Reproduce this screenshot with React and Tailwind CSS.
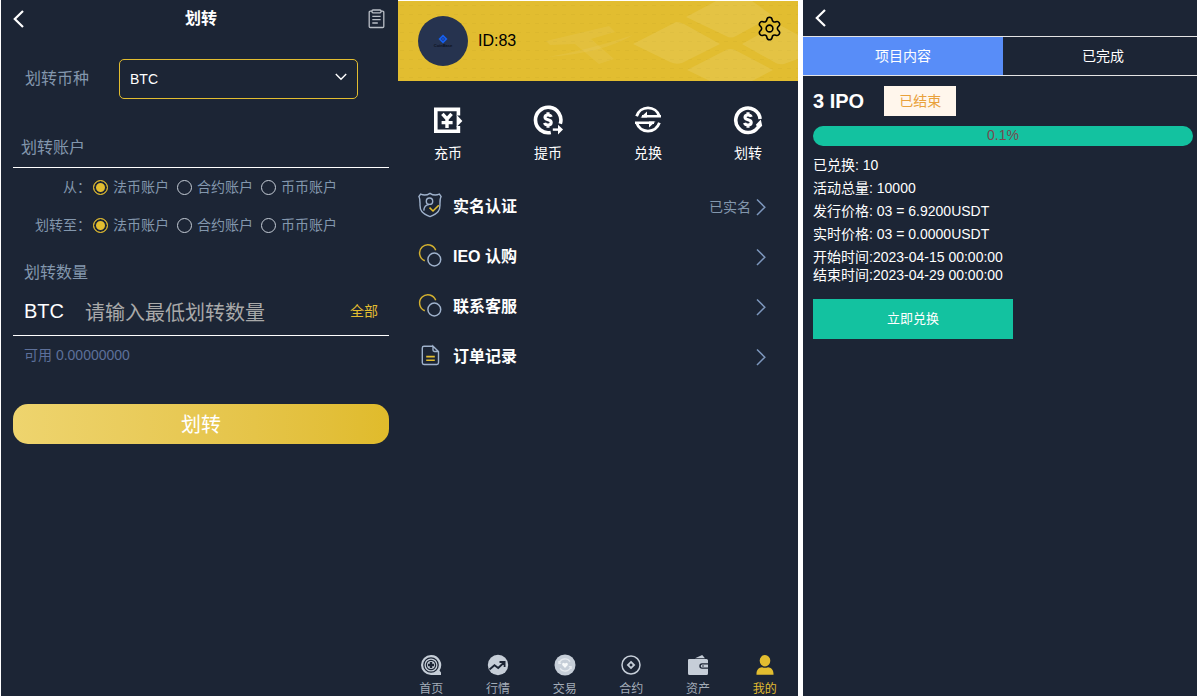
import { useState } from "react";
import { Settings } from "lucide-react";

const accounts = ["法币账户", "合约账户", "币币账户"];

function BackButton() {
  return (
    <button aria-label="返回" className="justify-self-start text-white cursor-pointer">
      <svg width="12" height="18" viewBox="0 0 12 18" fill="none" stroke="currentColor" strokeWidth="2.2">
        <path d="M10 1 L1.8 9 L10 17" />
      </svg>
    </button>
  );
}

function RadioRow({ name, title }) {
  const [value, setValue] = useState(accounts[0]);

  return (
    <div role="radiogroup" aria-label={title} className="flex items-center h-[38px] text-sm text-[#8397ad]">
      <span className="w-[78px] text-right mr-0.5">{title}</span>
      {accounts.map((a) => (
        <label key={a} className="flex items-center gap-[5px] mr-2">
          <input
            type="radio"
            name={name}
            checked={value === a}
            onChange={() => setValue(a)}
            className="appearance-none size-[15px] rounded-full border border-[#c5ccd6] checked:border-[#e2bd30] checked:bg-[#e2bd30] checked:shadow-[inset_0_0_0_2px_#1c2535]"
          />
          {a}
        </label>
      ))}
    </div>
  );
}

function TransferPanel() {
  const [amount, setAmount] = useState("");

  return (
    <section className="bg-[#1c2535] pl-3 pr-[9px]">
      <header className="grid grid-cols-3 items-center h-[37px]">
        <BackButton />
        <h1 className="text-center text-base font-bold text-white">划转</h1>
        <button aria-label="记录" className="justify-self-end mr-1 text-[#b9bec6] cursor-pointer">
          <svg width="17" height="20" viewBox="0 0 17 20" fill="none" stroke="currentColor" strokeWidth="1.3">
            <path d="M4 2.2H2.3Q1.2 2.2 1.2 3.3V17.4Q1.2 18.5 2.3 18.5H14.7Q15.8 18.5 15.8 17.4V3.3Q15.8 2.2 14.7 2.2H13" />
            <rect x="4" y="1" width="9" height="2.8" rx="1" />
            <path d="M4.3 7.4H12.6M4.3 10.7H12.6M4.3 14H9.8" />
          </svg>
        </button>
      </header>

      <div className="flex items-center mt-[22px] pl-3">
        <label htmlFor="coin" className="w-[94px] text-base text-[#8397ad]">
          划转币种
        </label>
        <div className="relative grow mr-[31px]">
          <select
            id="coin"
            className="appearance-none w-full h-10 rounded-[5px] border border-[#e2bd30] bg-transparent px-2.5 text-sm text-white"
          >
            <option>BTC</option>
          </select>
          <svg
            className="absolute right-[11px] top-3.5 pointer-events-none"
            width="12"
            height="8"
            viewBox="0 0 12 8"
            fill="none"
            stroke="white"
            strokeWidth="1.4"
          >
            <path d="M0.8 1 L6 6.2 L11.2 1" />
          </svg>
        </div>
      </div>

      <h2 className="mt-[37px] h-[31px] pl-2 text-base text-[#8397ad]">划转账户</h2>
      <div className="border-t border-white">
        <RadioRow name="from" title="从：" />
        <RadioRow name="to" title="划转至：" />
      </div>

      <label htmlFor="amount" className="block mt-[17px] pl-[11px] text-base text-[#8397ad]">
        划转数量
      </label>
      <div className="flex items-center h-[51px] pt-0.5 border-b border-white pl-[11px] pr-[11px]">
        <span className="w-[61px] text-xl text-white">BTC</span>
        <input
          id="amount"
          value={amount}
          onChange={(e) => setAmount(e.target.value)}
          placeholder="请输入最低划转数量"
          className="grow min-w-0 pt-1 bg-transparent text-xl text-white outline-none placeholder:text-[#a9a9a9]"
        />
        <button className="text-sm text-[#e2bd30] cursor-pointer">全部</button>
      </div>
      <p className="mt-[9px] pl-[11px] text-sm text-[#5d709a]">可用 0.00000000</p>

      <button className="block w-full h-10 mt-[39px] pt-0.5 rounded-[15px] bg-linear-to-r from-[#eed46e] to-[#e0bb2b] text-xl text-white cursor-pointer">
        划转
      </button>
    </section>
  );
}

function DepositIcon() {
  return (
    <svg width="30" height="30" viewBox="0 0 30 30" fill="none" stroke="white">
      <path d="M25.4 10.5V4.4H2.8V26.2H25.4V21" strokeWidth="3.6" />
      <path d="M23.6 9.8L29.4 16L23.6 22Z" fill="white" stroke="none" />
      <path d="M9.4 8.8L14 14L18.6 8.8M14 13.5V23M8.6 17.6H19.6" strokeWidth="3.4" />
    </svg>
  );
}

function Dollar() {
  return (
    <path
      d="M18.2 11.9C17.8 10.6 16.7 10 15 10C13.1 10 12 10.8 12 12.3C12 15.8 18.2 13.8 18.2 17.5C18.2 19.2 17 20 15 20C13.1 20 12 19.3 11.6 17.9M15 7.2V10M15 20V22.8"
      strokeWidth="3.1"
    />
  );
}

function WithdrawIcon() {
  return (
    <svg width="30" height="30" viewBox="0 0 30 30" fill="none" stroke="white">
      <path d="M17.8 27.4A12.7 12.7 0 1 1 27.3 18.8" strokeWidth="3.6" />
      <Dollar />
      <path d="M19.8 24.6H27" strokeWidth="2.4" />
      <path d="M25 19.8L30 24.6L25 29.4Z" fill="white" stroke="none" />
    </svg>
  );
}

function SwapIcon() {
  return (
    <svg width="30" height="30" viewBox="0 0 30 30" fill="none" stroke="white">
      <path d="M3.6 11.2A12 12 0 0 1 26.4 11.2M26.4 17.8A12 12 0 0 1 3.6 17.8" strokeWidth="2.8" />
      <path d="M9 11.2H28M21 17.8H2" strokeWidth="2.6" />
      <path d="M7.5 12.4L14 6.6V12.4ZM22.5 16.6L16 22.4V16.6Z" fill="white" stroke="none" />
    </svg>
  );
}

function TransferIcon() {
  return (
    <svg width="30" height="30" viewBox="0 0 30 30" fill="none" stroke="white">
      <path d="M25 22.2A12.2 12.2 0 1 1 27.1 14" strokeWidth="3.6" />
      <Dollar />
      <path d="M22.9 19.8L27.8 14.4L29.2 20.8L25.5 24.2Z" fill="white" stroke="none" />
    </svg>
  );
}

function VerifyIcon() {
  return (
    <svg width="24" height="30" viewBox="0 0 24 30" fill="none" stroke="#9fb2cc" strokeWidth="1.4">
      <path d="M12 1.3C9.5 3 5.5 3.4 2.6 2.2L0.9 4.5C2.4 7 2.1 9.5 2 13C2 18.5 3.5 21 12 24.6C20.5 21 22 18.5 22 13C21.9 9.5 21.6 7 23.1 4.5L21.4 2.2C18.5 3.4 14.5 3 12 1.3Z" />
      <circle cx="11.5" cy="9.2" r="3.2" />
      <path d="M5.8 18.6C6 14.8 8 12.8 11 12.6" />
      <path d="M11.5 15.6L15 19L20.8 13.2" stroke="#e2bd30" strokeWidth="1.6" />
    </svg>
  );
}

function RingsIcon() {
  return (
    <svg width="24" height="30" viewBox="0 0 24 30" fill="none" strokeWidth="1.5">
      <path d="M6.8 18.7A8.3 8.3 0 1 1 17.7 8.2" stroke="#d3b02f" />
      <circle cx="16.3" cy="17.5" r="6.4" stroke="#9fb2cc" />
    </svg>
  );
}

function OrderIcon() {
  return (
    <svg width="24" height="30" viewBox="0 0 24 30" fill="none" stroke="#9fb2cc" strokeWidth="1.4">
      <path d="M15 4.2H6Q4.3 4.2 4.3 5.9V20.8Q4.3 22.5 6 22.5H18.8Q20.5 22.5 20.5 20.8V9.5L15 4.2V8.1Q15 9.5 16.4 9.5H20.5" />
      <path d="M8.2 14.6H16.8M8.2 18.2H16.8" stroke="#e2bd30" strokeWidth="1.6" />
    </svg>
  );
}

const actions = [
  { label: "充币", Icon: DepositIcon },
  { label: "提币", Icon: WithdrawIcon },
  { label: "兑换", Icon: SwapIcon },
  { label: "划转", Icon: TransferIcon },
];

const menu = [
  { label: "实名认证", Icon: VerifyIcon, note: "已实名" },
  { label: "IEO 认购", Icon: RingsIcon },
  { label: "联系客服", Icon: RingsIcon },
  { label: "订单记录", Icon: OrderIcon },
];

const tabs = [
  {
    label: "首页",
    icon: (
      <>
        <path d="M11 1A10 10 0 1 0 11 21H21V18.5L19.5 16.5A10 10 0 0 0 11 1Z" fill="#c6ced8" />
        <g fill="none" stroke="#1c2535" strokeWidth="1.3">
          <circle cx="11" cy="11" r="7.2" />
          <circle cx="11" cy="11" r="4.6" />
        </g>
        <path d="M11 8V14M8 11H14" stroke="#1c2535" strokeWidth="2.4" />
      </>
    ),
  },
  {
    label: "行情",
    icon: (
      <>
        <circle cx="11" cy="11" r="10.2" fill="#c6ced8" />
        <path d="M2.5 15.5L7.5 11.2L11.2 14L17 8.5M12.5 8H17.6V13" fill="none" stroke="#1c2535" strokeWidth="1.8" />
      </>
    ),
  },
  {
    label: "交易",
    icon: (
      <>
        <circle cx="11" cy="11" r="10.5" fill="#c6ced8" />
        <path
          d="M5.3 9A6 6 0 0 1 16 7.7M16.7 13A6 6 0 0 1 6 14.3M4.9 7V9.3H7.2M17.1 15V12.7H14.8"
          fill="none"
          stroke="#e6eaef"
          strokeWidth="1.3"
        />
        <path d="M11 14L8.2 11Q7.6 8.9 9.5 8.7L11 9.6L12.5 8.7Q14.4 8.9 13.8 11Z" fill="#f7f9fa" />
      </>
    ),
  },
  {
    label: "合约",
    icon: (
      <g fill="none" stroke="#c6ced8">
        <circle cx="11" cy="11" r="9" strokeWidth="1.5" />
        <path d="M11 7.9L14.1 11L11 14.1L7.9 11Z" strokeWidth="1.8" />
      </g>
    ),
  },
  {
    label: "资产",
    icon: (
      <>
        <path d="M8 4.2L15.2 1L18 4.2Z" fill="#c6ced8" />
        <path
          d="M2.2 5H19.5Q21 5 21 6.5V9.3H15A2.7 2.7 0 0 0 15 14.7H21V19.5Q21 21 19.5 21H2.5Q1 21 1 19.5V5.5Z"
          fill="#c6ced8"
        />
        <path d="M15.2 10.5H21V13.5H15.2A1.5 1.5 0 0 1 15.2 10.5Z" fill="#c6ced8" />
        <circle cx="16" cy="12" r="0.8" fill="#1c2535" />
      </>
    ),
  },
  {
    label: "我的",
    active: true,
    icon: (
      <>
        <ellipse cx="11" cy="6.7" rx="5.3" ry="5.7" fill="#e2bd30" />
        <path d="M2.5 20.8C2.2 15.5 5 13.4 8 13.2Q11 14.4 14 13.2C17 13.4 19.8 15.5 19.5 20.8Z" fill="#e2bd30" />
      </>
    ),
  },
];

function HeaderPattern() {
  return (
    <svg className="absolute inset-0 size-full" viewBox="0 0 400 80" preserveAspectRatio="xMaxYMid slice">
      <defs>
        <pattern id="dashes" width="9" height="9" patternUnits="userSpaceOnUse">
          <rect x="2" y="4" width="4" height="1" fill="#cba628" fillOpacity="0.25" />
        </pattern>
      </defs>
      <rect width="400" height="80" fill="url(#dashes)" />
      <g fill="#ecd98c" fillOpacity="0.22">
        <path d="M235 43L278 21Q282 21 286 23L322 43L284 62Q278 64 272 61Z" />
        <path d="M288 16L318 0H354L375 15L338 35Q333 38 328 35Z" />
        <path d="M344 43L380 23L400 34V58L386 63Q380 64 376 61Z" />
        <path d="M289 69L328 49Q332 47 337 49L375 69L354 80H312Z" />
      </g>
      <g fill="#ecd98c" fillOpacity="0.15">
        <path d="M148 40L211 25L217 31L193 38L216 58L201 63L177 43L152 44Z" />
        <path d="M150 56Q190 49 235 34Q205 52 150 56Z" />
      </g>
    </svg>
  );
}

function ProfilePanel() {
  return (
    <section className="flex flex-col bg-[#1c2535] border-t border-white">
      <header className="relative h-20 bg-[#e2bd30]">
        <HeaderPattern />
        <div className="relative flex items-center h-20 pl-5 pr-[15px]">
          <div className="flex flex-col items-center justify-center size-[50px] rounded-full bg-[#26334f]">
            <svg width="10" height="10" viewBox="0 0 10 10">
              <path d="M5 0.5L9.5 5L5 9.5L0.5 5Z" fill="#1660f0" />
              <circle cx="5" cy="5" r="1.4" fill="none" stroke="#1c3f94" />
            </svg>
            <span className="text-[4px] leading-[4px] font-bold text-[#0c1220]">CoinBase</span>
          </div>
          <span className="ml-2.5 text-base text-black">ID:83</span>
          <button aria-label="设置" className="ml-auto mb-[26px] text-black cursor-pointer">
            <Settings size={27} strokeWidth={1.4} />
          </button>
        </div>
      </header>

      <div className="grid grid-cols-4 pt-6">
        {actions.map(({ label, Icon }) => (
          <button key={label} className="flex flex-col items-center gap-2 text-sm text-white cursor-pointer">
            <Icon />
            {label}
          </button>
        ))}
      </div>

      <ul className="mt-[19px]">
        {menu.map(({ label, Icon, note }) => (
          <li key={label}>
            <a href="#" className="flex items-center h-[50px] pl-5 pr-8">
              <Icon />
              <span className="ml-[11px] text-base font-bold text-white">{label}</span>
              <span className="ml-auto mr-[5px] text-sm text-[#8397ad]">{note}</span>
              <svg width="10" height="18" viewBox="0 0 10 18" fill="none" stroke="#7d97bd" strokeWidth="1.5">
                <path d="M1 1.5L8.8 9.2L1 17" />
              </svg>
            </a>
          </li>
        ))}
      </ul>

      <nav className="grid grid-cols-6 mt-auto">
        {tabs.map((tab) => (
          <a
            key={tab.label}
            href="#"
            className={`flex flex-col items-center gap-1.5 text-xs leading-[14px] ${tab.active ? "text-[#e2bd30]" : "text-[#a3acb8]"}`}
          >
            <svg width="22" height="22" viewBox="0 0 22 22">
              {tab.icon}
            </svg>
            {tab.label}
          </a>
        ))}
      </nav>
    </section>
  );
}

const details = ["已兑换: 10", "活动总量: 10000", "发行价格: 03 = 6.9200USDT", "实时价格: 03 = 0.0000USDT"];

function IpoPanel() {
  const [tab, setTab] = useState(0);

  return (
    <section className="ml-[5px] bg-[#1c2535] text-white">
      <header className="flex items-center h-9 pl-3">
        <BackButton />
      </header>
      <div role="tablist" className="grid grid-cols-2 h-10 border-y border-[#e4e4e4] text-sm">
        {["项目内容", "已完成"].map((name, i) => (
          <button
            key={name}
            role="tab"
            aria-selected={tab === i}
            onClick={() => setTab(i)}
            className={`cursor-pointer ${tab === i ? "bg-[#588df8]" : ""}`}
          >
            {name}
          </button>
        ))}
      </div>

      <div className="p-2.5">
        <div className="flex items-center gap-5">
          <h2 className="text-xl font-bold">3 IPO</h2>
          <span className="flex items-center h-[30px] px-[15px] bg-[#fff6ec] text-sm text-[#e9a13b]">已结束</span>
        </div>
        <div className="h-5 mt-2.5 rounded-full bg-[#13c2a0] text-center text-sm leading-[18px] text-[#7a4a50]">
          0.1%
        </div>
        <div className="mt-2.5 text-sm leading-[18px]">
          {details.map((line) => (
            <p key={line} className="mb-[5px]">
              {line}
            </p>
          ))}
          <p>开始时间:2023-04-15 00:00:00</p>
          <p>结束时间:2023-04-29 00:00:00</p>
        </div>
        <button className="w-[200px] h-10 mt-[15px] bg-[#13c2a0] text-[13px] cursor-pointer">立即兑换</button>
      </div>
    </section>
  );
}

export default function App() {
  return (
    <div className="min-h-screen overflow-hidden bg-white pl-px font-['Liberation_Sans','Noto_Sans_CJK_SC',sans-serif]">
      <main className="grid grid-cols-[397fr_400fr_405fr] min-h-screen -mr-1.5">
        <TransferPanel />
        <ProfilePanel />
        <IpoPanel />
      </main>
    </div>
  );
}
